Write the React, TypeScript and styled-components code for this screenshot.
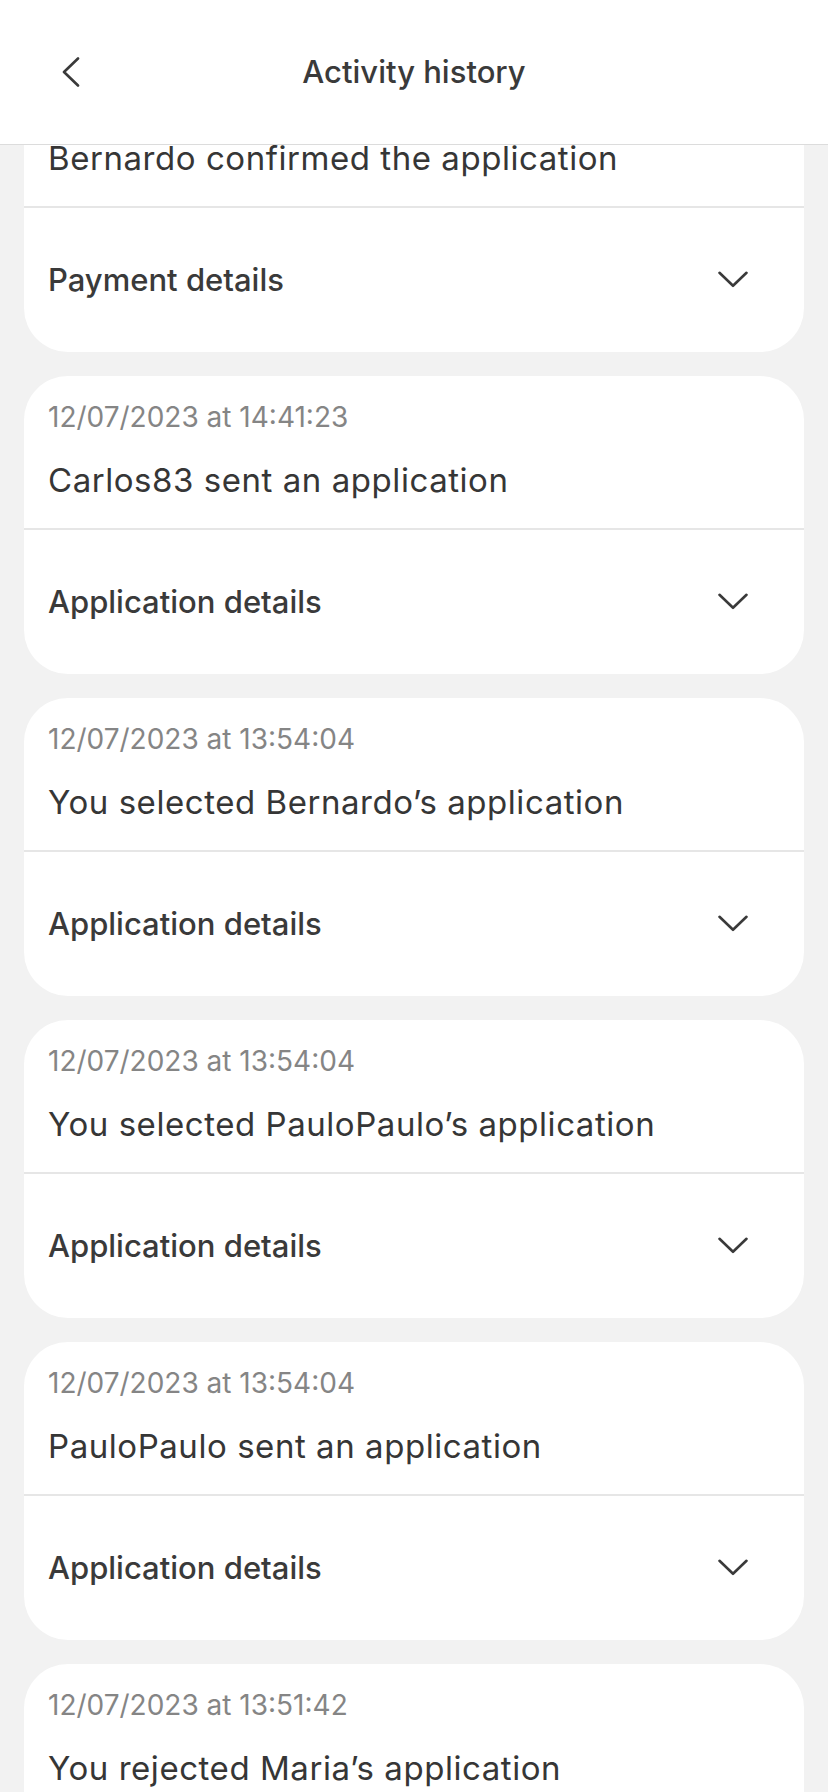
import React from "react";
import styled, { createGlobalStyle } from "styled-components";

const GlobalStyle = createGlobalStyle`
  html, body {
    margin: 0;
    padding: 0;
    background: #f2f2f2;
  }
  body {
    font-family: Inter, "Noto Sans", "Liberation Sans", sans-serif;
    color: #3a3a3a;
    -webkit-font-smoothing: antialiased;
  }
`;

const Screen = styled.div`
  width: 828px;
  height: 1792px;
  overflow: hidden;
  background: #f2f2f2;
  position: relative;
`;

const Header = styled.header`
  position: absolute;
  top: 0;
  left: 0;
  right: 0;
  height: 144px;
  background: #ffffff;
  border-bottom: 1px solid #dcdcdc;
  display: flex;
  align-items: center;
  justify-content: center;
  z-index: 2;
`;

const BackButton = styled.button`
  position: absolute;
  left: 54px;
  top: 50%;
  transform: translateY(-50%);
  width: 34px;
  height: 44px;
  padding: 0;
  border: none;
  background: transparent;
  display: flex;
  align-items: center;
  justify-content: center;
`;

const Title = styled.h1`
  margin: 0;
  font-size: 31px;
  font-weight: 500;
  line-height: 36px;
  color: #3a3a3a;
`;

const List = styled.main`
  display: flex;
  flex-direction: column;
  gap: 24px;
  padding: 54px 24px 0;
`;

const Card = styled.section`
  background: #ffffff;
  border-radius: 44px;
  overflow: hidden;
`;

const Summary = styled.div`
  height: 154px;
  box-sizing: border-box;
  padding: 25px 24px 0;
  border-bottom: 2px solid #e6e6e6;
  display: flex;
  flex-direction: column;
  gap: 27px;
`;

const Stamp = styled.div`
  font-size: 28px;
  line-height: 32px;
  color: #858585;
`;

const Message = styled.div`
  font-size: 33px;
  letter-spacing: 0.55px;
  line-height: 40px;
  color: #363636;
  white-space: nowrap;
`;

const DetailsRow = styled.div`
  height: 144px;
  padding: 0 56px 0 24px;
  display: flex;
  align-items: center;
  justify-content: space-between;
`;

const DetailsLabel = styled.span`
  font-size: 31px;
  font-weight: 500;
  line-height: 36px;
  color: #3a3a3a;
`;

const ChevronDown = () => (
  <svg width="30" height="18" viewBox="0 0 30 18" fill="none">
    <polyline
      points="1.5,1.8 15,14.8 28.5,1.8"
      stroke="#3a3a3a"
      strokeWidth="2.6"
      strokeLinecap="round"
      strokeLinejoin="round"
    />
  </svg>
);

const ChevronLeft = () => (
  <svg width="18" height="30" viewBox="0 0 18 30" fill="none">
    <polyline
      points="16,1.5 2,15 16,28.5"
      stroke="#3a3a3a"
      strokeWidth="2.6"
      strokeLinecap="round"
      strokeLinejoin="round"
    />
  </svg>
);

type Entry = { stamp: string; message: string; details: string };

const entries: Entry[] = [
  { stamp: "12/07/2023 at 14:52:10", message: "Bernardo confirmed the application", details: "Payment details" },
  { stamp: "12/07/2023 at 14:41:23", message: "Carlos83 sent an application", details: "Application details" },
  { stamp: "12/07/2023 at 13:54:04", message: "You selected Bernardo\u2019s application", details: "Application details" },
  { stamp: "12/07/2023 at 13:54:04", message: "You selected PauloPaulo\u2019s application", details: "Application details" },
  { stamp: "12/07/2023 at 13:54:04", message: "PauloPaulo sent an application", details: "Application details" },
  { stamp: "12/07/2023 at 13:51:42", message: "You rejected Maria\u2019s application", details: "Application details" },
];

export default function App() {
  return (
    <>
      <GlobalStyle />
      <Screen>
        <Header>
          <BackButton aria-label="Back">
            <ChevronLeft />
          </BackButton>
          <Title>Activity history</Title>
        </Header>
        <List>
          {entries.map((e, i) => (
            <Card key={i}>
              <Summary>
                <Stamp>{e.stamp}</Stamp>
                <Message>{e.message}</Message>
              </Summary>
              <DetailsRow>
                <DetailsLabel>{e.details}</DetailsLabel>
                <ChevronDown />
              </DetailsRow>
            </Card>
          ))}
        </List>
      </Screen>
    </>
  );
}
